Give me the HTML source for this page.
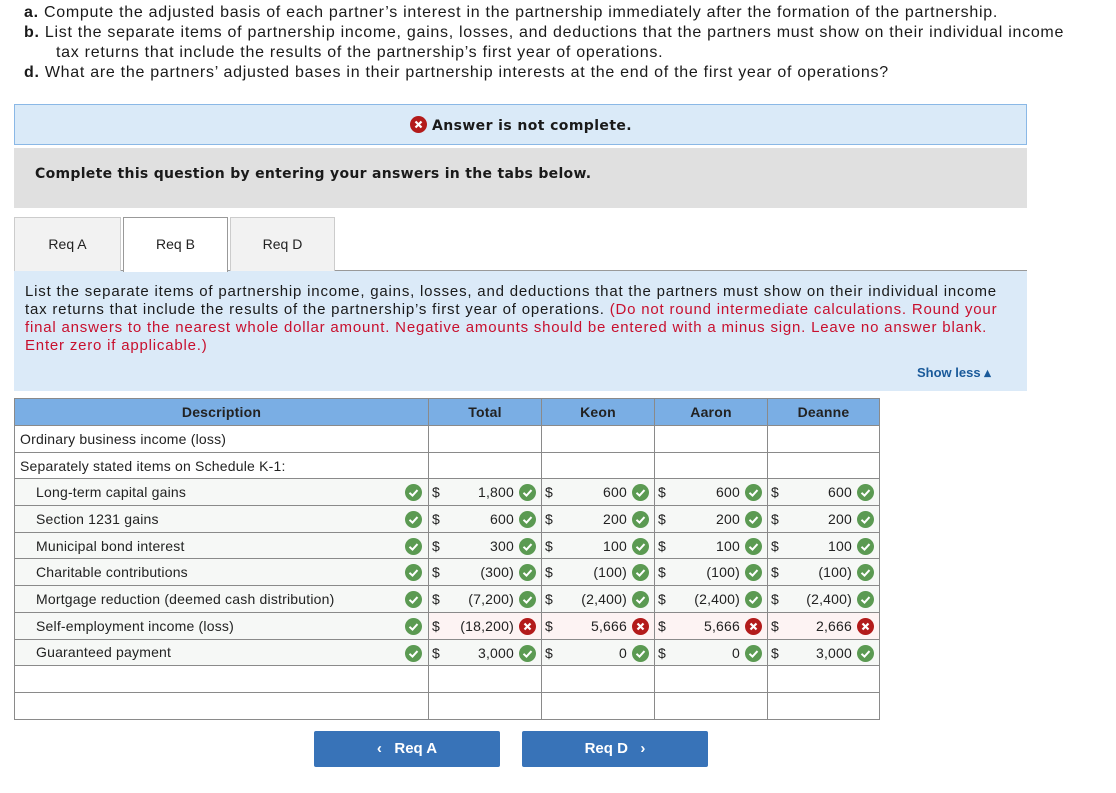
<!DOCTYPE html>
<html><head><meta charset="utf-8"><style>
body{margin:0;width:1116px;height:793px;background:#fff;font-family:"Liberation Sans",sans-serif;color:#222;position:relative;overflow:hidden}
.a{position:absolute}
.q{left:24px;font-size:16px;line-height:20px;color:#1a1a1a;letter-spacing:0.72px;white-space:nowrap}
.ok,.no{display:inline-block;width:17px;height:17px;border-radius:50%;position:absolute;top:5px}
.ok{background:#5b9a52}.no{background:#b31b1b}
.ok svg,.no svg{position:absolute;left:0;top:0}
table{position:absolute;left:14px;top:398px;border-collapse:collapse;font-size:14px;table-layout:fixed;width:865px;letter-spacing:0.2px}
td,th{border:1px solid #8a8a8a;height:25.7px;padding:0;position:relative;white-space:nowrap;overflow:hidden}
th{background:#7aaee4;font-weight:bold;font-size:14px;color:#222;height:26px}
.d{padding-left:5px}
.i{padding-left:21px}
tr.g td{background:#f6f8f6}
tr.r td.bad{background:#fdf3f3}
.dl{position:absolute;left:3px;top:5px}
.n{position:absolute;right:27px;top:5px}
.v .ok,.v .no{right:5px}
.d .ok{right:6px}
.btn{position:absolute;top:731px;width:186px;height:36px;background:#3873b8;border-radius:2px;color:#fff;font-weight:bold;font-size:15px;line-height:36px;text-align:center}
.dj{font-family:"DejaVu Sans","Liberation Sans",sans-serif;font-weight:bold;font-size:14px;color:#1a1a1a}
</style></head><body>
<div class="a q" style="top:3px"><b>a.</b> Compute the adjusted basis of each partner’s interest in the partnership immediately after the formation of the partnership.</div>
<div class="a q" style="top:23px"><b>b.</b> List the separate items of partnership income, gains, losses, and deductions that the partners must show on their individual income</div>
<div class="a q" style="top:43px;left:56px">tax returns that include the results of the partnership’s first year of operations.</div>
<div class="a q" style="top:63px"><b>d.</b> What are the partners’ adjusted bases in their partnership interests at the end of the first year of operations?</div>

<div class="a" style="left:14px;top:104px;width:1011px;height:39px;background:#daeaf8;border:1px solid #8ab8e6"></div>
<div class="a dj" style="left:410px;top:113px;letter-spacing:0.4px"><span class="no" style="position:relative;display:inline-block;top:3px;margin-right:5px"><svg width="17" height="17"><path d="M5.5 5.5l6 6M11.5 5.5l-6 6" stroke="#fff" stroke-width="2.2"/></svg></span>Answer is not complete.</div>

<div class="a" style="left:14px;top:148px;width:1013px;height:60px;background:#e0e0e0"></div>
<div class="a dj" style="left:35px;top:166px;letter-spacing:0.3px">Complete this question by entering your answers in the tabs below.</div>

<div class="a" style="left:14px;top:270px;width:1013px;height:120px;background:#dbeaf8;border-top:1px solid #999"></div>
<div class="a" style="left:14px;top:217px;width:105px;height:53px;background:#f2f2f2;border:1px solid #ccc;border-bottom:none;text-align:center;line-height:53px;font-size:14px">Req A</div>
<div class="a" style="left:123px;top:217px;width:103px;height:54px;background:#fff;border:1px solid #999;border-bottom:none;text-align:center;line-height:53px;font-size:14px">Req B</div>
<div class="a" style="left:230px;top:217px;width:103px;height:53px;background:#f2f2f2;border:1px solid #ccc;border-bottom:none;text-align:center;line-height:53px;font-size:14px">Req D</div>

<div class="a" style="left:25px;top:283px;font-size:15px;line-height:18px;color:#1a1a1a;letter-spacing:0.8px;white-space:nowrap">List the separate items of partnership income, gains, losses, and deductions that the partners must show on their individual income<br>tax returns that include the results of the partnership’s first year of operations. <span style="color:#c8102e">(Do not round intermediate calculations. Round your</span><br><span style="color:#c8102e">final answers to the nearest whole dollar amount. Negative amounts should be entered with a minus sign. Leave no answer blank.</span><br><span style="color:#c8102e">Enter zero if applicable.)</span></div>
<div class="a" style="left:917px;top:365px;font-size:13px;font-weight:bold;color:#1a5a9a">Show less ▴</div>

<table>
<colgroup><col style="width:414px"><col style="width:113px"><col style="width:113px"><col style="width:113px"><col style="width:112px"></colgroup>
<tr><th>Description</th><th>Total</th><th>Keon</th><th>Aaron</th><th>Deanne</th></tr>
<tr><td class="d">Ordinary business income (loss)</td><td></td><td></td><td></td><td></td></tr>
<tr><td class="d">Separately stated items on Schedule K-1:</td><td></td><td></td><td></td><td></td></tr>
<tr class="g"><td class="d i">Long-term capital gains<span class="ok"><svg width="17" height="17"><path d="M4.5 8.8l3 2.8 5-5.5" fill="none" stroke="#fff" stroke-width="2"/></svg></span></td><td class="v"><span class="dl">$</span><span class="n">1,800</span><span class="ok"><svg width="17" height="17"><path d="M4.5 8.8l3 2.8 5-5.5" fill="none" stroke="#fff" stroke-width="2"/></svg></span></td><td class="v"><span class="dl">$</span><span class="n">600</span><span class="ok"><svg width="17" height="17"><path d="M4.5 8.8l3 2.8 5-5.5" fill="none" stroke="#fff" stroke-width="2"/></svg></span></td><td class="v"><span class="dl">$</span><span class="n">600</span><span class="ok"><svg width="17" height="17"><path d="M4.5 8.8l3 2.8 5-5.5" fill="none" stroke="#fff" stroke-width="2"/></svg></span></td><td class="v"><span class="dl">$</span><span class="n">600</span><span class="ok"><svg width="17" height="17"><path d="M4.5 8.8l3 2.8 5-5.5" fill="none" stroke="#fff" stroke-width="2"/></svg></span></td></tr>
<tr class="g"><td class="d i">Section 1231 gains<span class="ok"><svg width="17" height="17"><path d="M4.5 8.8l3 2.8 5-5.5" fill="none" stroke="#fff" stroke-width="2"/></svg></span></td><td class="v"><span class="dl">$</span><span class="n">600</span><span class="ok"><svg width="17" height="17"><path d="M4.5 8.8l3 2.8 5-5.5" fill="none" stroke="#fff" stroke-width="2"/></svg></span></td><td class="v"><span class="dl">$</span><span class="n">200</span><span class="ok"><svg width="17" height="17"><path d="M4.5 8.8l3 2.8 5-5.5" fill="none" stroke="#fff" stroke-width="2"/></svg></span></td><td class="v"><span class="dl">$</span><span class="n">200</span><span class="ok"><svg width="17" height="17"><path d="M4.5 8.8l3 2.8 5-5.5" fill="none" stroke="#fff" stroke-width="2"/></svg></span></td><td class="v"><span class="dl">$</span><span class="n">200</span><span class="ok"><svg width="17" height="17"><path d="M4.5 8.8l3 2.8 5-5.5" fill="none" stroke="#fff" stroke-width="2"/></svg></span></td></tr>
<tr class="g"><td class="d i">Municipal bond interest<span class="ok"><svg width="17" height="17"><path d="M4.5 8.8l3 2.8 5-5.5" fill="none" stroke="#fff" stroke-width="2"/></svg></span></td><td class="v"><span class="dl">$</span><span class="n">300</span><span class="ok"><svg width="17" height="17"><path d="M4.5 8.8l3 2.8 5-5.5" fill="none" stroke="#fff" stroke-width="2"/></svg></span></td><td class="v"><span class="dl">$</span><span class="n">100</span><span class="ok"><svg width="17" height="17"><path d="M4.5 8.8l3 2.8 5-5.5" fill="none" stroke="#fff" stroke-width="2"/></svg></span></td><td class="v"><span class="dl">$</span><span class="n">100</span><span class="ok"><svg width="17" height="17"><path d="M4.5 8.8l3 2.8 5-5.5" fill="none" stroke="#fff" stroke-width="2"/></svg></span></td><td class="v"><span class="dl">$</span><span class="n">100</span><span class="ok"><svg width="17" height="17"><path d="M4.5 8.8l3 2.8 5-5.5" fill="none" stroke="#fff" stroke-width="2"/></svg></span></td></tr>
<tr class="g"><td class="d i">Charitable contributions<span class="ok"><svg width="17" height="17"><path d="M4.5 8.8l3 2.8 5-5.5" fill="none" stroke="#fff" stroke-width="2"/></svg></span></td><td class="v"><span class="dl">$</span><span class="n">(300)</span><span class="ok"><svg width="17" height="17"><path d="M4.5 8.8l3 2.8 5-5.5" fill="none" stroke="#fff" stroke-width="2"/></svg></span></td><td class="v"><span class="dl">$</span><span class="n">(100)</span><span class="ok"><svg width="17" height="17"><path d="M4.5 8.8l3 2.8 5-5.5" fill="none" stroke="#fff" stroke-width="2"/></svg></span></td><td class="v"><span class="dl">$</span><span class="n">(100)</span><span class="ok"><svg width="17" height="17"><path d="M4.5 8.8l3 2.8 5-5.5" fill="none" stroke="#fff" stroke-width="2"/></svg></span></td><td class="v"><span class="dl">$</span><span class="n">(100)</span><span class="ok"><svg width="17" height="17"><path d="M4.5 8.8l3 2.8 5-5.5" fill="none" stroke="#fff" stroke-width="2"/></svg></span></td></tr>
<tr class="g"><td class="d i">Mortgage reduction (deemed cash distribution)<span class="ok"><svg width="17" height="17"><path d="M4.5 8.8l3 2.8 5-5.5" fill="none" stroke="#fff" stroke-width="2"/></svg></span></td><td class="v"><span class="dl">$</span><span class="n">(7,200)</span><span class="ok"><svg width="17" height="17"><path d="M4.5 8.8l3 2.8 5-5.5" fill="none" stroke="#fff" stroke-width="2"/></svg></span></td><td class="v"><span class="dl">$</span><span class="n">(2,400)</span><span class="ok"><svg width="17" height="17"><path d="M4.5 8.8l3 2.8 5-5.5" fill="none" stroke="#fff" stroke-width="2"/></svg></span></td><td class="v"><span class="dl">$</span><span class="n">(2,400)</span><span class="ok"><svg width="17" height="17"><path d="M4.5 8.8l3 2.8 5-5.5" fill="none" stroke="#fff" stroke-width="2"/></svg></span></td><td class="v"><span class="dl">$</span><span class="n">(2,400)</span><span class="ok"><svg width="17" height="17"><path d="M4.5 8.8l3 2.8 5-5.5" fill="none" stroke="#fff" stroke-width="2"/></svg></span></td></tr>
<tr class="g r"><td class="d i">Self-employment income (loss)<span class="ok"><svg width="17" height="17"><path d="M4.5 8.8l3 2.8 5-5.5" fill="none" stroke="#fff" stroke-width="2"/></svg></span></td><td class="v bad"><span class="dl">$</span><span class="n">(18,200)</span><span class="no"><svg width="17" height="17"><path d="M5.5 5.5l6 6M11.5 5.5l-6 6" stroke="#fff" stroke-width="2.2"/></svg></span></td><td class="v bad"><span class="dl">$</span><span class="n">5,666</span><span class="no"><svg width="17" height="17"><path d="M5.5 5.5l6 6M11.5 5.5l-6 6" stroke="#fff" stroke-width="2.2"/></svg></span></td><td class="v bad"><span class="dl">$</span><span class="n">5,666</span><span class="no"><svg width="17" height="17"><path d="M5.5 5.5l6 6M11.5 5.5l-6 6" stroke="#fff" stroke-width="2.2"/></svg></span></td><td class="v bad"><span class="dl">$</span><span class="n">2,666</span><span class="no"><svg width="17" height="17"><path d="M5.5 5.5l6 6M11.5 5.5l-6 6" stroke="#fff" stroke-width="2.2"/></svg></span></td></tr>
<tr class="g"><td class="d i">Guaranteed payment<span class="ok"><svg width="17" height="17"><path d="M4.5 8.8l3 2.8 5-5.5" fill="none" stroke="#fff" stroke-width="2"/></svg></span></td><td class="v"><span class="dl">$</span><span class="n">3,000</span><span class="ok"><svg width="17" height="17"><path d="M4.5 8.8l3 2.8 5-5.5" fill="none" stroke="#fff" stroke-width="2"/></svg></span></td><td class="v"><span class="dl">$</span><span class="n">0</span><span class="ok"><svg width="17" height="17"><path d="M4.5 8.8l3 2.8 5-5.5" fill="none" stroke="#fff" stroke-width="2"/></svg></span></td><td class="v"><span class="dl">$</span><span class="n">0</span><span class="ok"><svg width="17" height="17"><path d="M4.5 8.8l3 2.8 5-5.5" fill="none" stroke="#fff" stroke-width="2"/></svg></span></td><td class="v"><span class="dl">$</span><span class="n">3,000</span><span class="ok"><svg width="17" height="17"><path d="M4.5 8.8l3 2.8 5-5.5" fill="none" stroke="#fff" stroke-width="2"/></svg></span></td></tr>
<tr><td class="d"></td><td></td><td></td><td></td><td></td></tr>
<tr><td class="d"></td><td></td><td></td><td></td><td></td></tr>
</table>

<div class="btn" style="left:314px">‹&nbsp;&nbsp;&nbsp;Req A</div>
<div class="btn" style="left:522px">Req D&nbsp;&nbsp;&nbsp;›</div>
</body></html>
